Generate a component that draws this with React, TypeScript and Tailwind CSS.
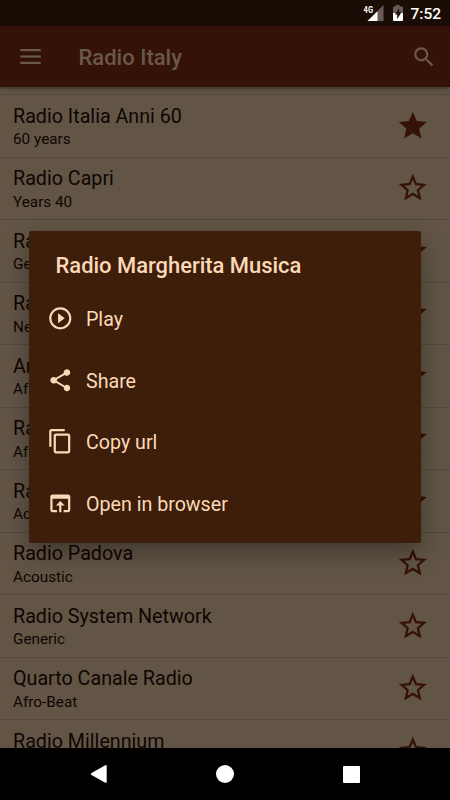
import { clsx } from 'clsx';

interface Station {
  name: string;
  genre: string;
  favorite?: boolean;
}

const stations: Station[] = [
  { name: 'Radio Italia Anni 60', genre: '60 years', favorite: true },
  { name: 'Radio Capri', genre: 'Years 40' },
  { name: 'Radio', genre: 'Generic' },
  { name: 'Radio', genre: 'News' },
  { name: 'Arena', genre: 'Afro-Beat' },
  { name: 'Radio', genre: 'Afro-Beat' },
  { name: 'Radio', genre: 'Acoustic' },
  { name: 'Radio Padova', genre: 'Acoustic' },
  { name: 'Radio System Network', genre: 'Generic' },
  { name: 'Quarto Canale Radio', genre: 'Afro-Beat' },
  { name: 'Radio Millennium', genre: '' },
];

const STAR =
  'M12 17.27L18.18 21l-1.64-7.03L22 9.24l-7.19-.61L12 2 9.19 8.63 2 9.24l5.46 4.73L5.82 21z';
const STAR_BORDER =
  'M22 9.24l-7.19-.62L12 2 9.19 8.63 2 9.24l5.46 4.73L5.82 21 12 17.27 18.18 21l-1.63-7.03L22 9.24zM12 15.4l-3.76 2.27 1-4.28-3.32-2.88 4.38-.38L12 6.1l1.71 4.04 4.38.38-3.32 2.88 1 4.28L12 15.4z';

const actions = [
  {
    label: 'Play',
    path: 'M10 16.5l6-4.5-6-4.5v9zM12 2C6.48 2 2 6.48 2 12s4.48 10 10 10 10-4.48 10-10S17.52 2 12 2zm0 18c-4.41 0-8-3.59-8-8s3.59-8 8-8 8 3.59 8 8-3.59 8-8 8z',
  },
  {
    label: 'Share',
    path: 'M18 16.08c-.76 0-1.44.3-1.96.77L8.91 12.7c.05-.23.09-.46.09-.7s-.04-.47-.09-.7l7.05-4.11c.54.5 1.25.81 2.04.81 1.66 0 3-1.34 3-3s-1.34-3-3-3-3 1.34-3 3c0 .24.04.47.09.7L8.04 9.81C7.5 9.31 6.79 9 6 9c-1.66 0-3 1.34-3 3s1.34 3 3 3c.79 0 1.5-.31 2.04-.81l7.12 4.16c-.05.21-.08.43-.08.65 0 1.61 1.31 2.92 2.92 2.92s2.92-1.31 2.92-2.92-1.31-2.92-2.92-2.92z',
  },
  {
    label: 'Copy url',
    path: 'M16 1H4c-1.1 0-2 .9-2 2v14h2V3h12V1zm3 4H8c-1.1 0-2 .9-2 2v14c0 1.1.9 2 2 2h11c1.1 0 2-.9 2-2V7c0-1.1-.9-2-2-2zm0 16H8V7h11v14z',
  },
  {
    label: 'Open in browser',
    path: 'M19 4H5c-1.11 0-2 .9-2 2v12c0 1.1.89 2 2 2h4v-2H5V8h14v10h-4v2h4c1.1 0 2-.9 2-2V6c0-1.1-.89-2-2-2zm-7 6l-4 4h3v6h2v-6h3l-4-4z',
  },
];

function Icon({ path, className }: { path: string; className?: string }) {
  return (
    <svg viewBox="0 0 24 24" fill="currentColor" className={clsx('shrink-0', className)}>
      <path d={path} />
    </svg>
  );
}

function StatusBar() {
  return (
    <div className="flex h-[26px] shrink-0 items-center justify-end bg-[#190d05] pr-[9px] text-white">
      <svg width="21" height="18" viewBox="0 0 21 18" className="mt-px mr-[8px]">
        <path d="M20.5 0v16H4.5z" fill="#685b55" />
        <path d="M14.5 6.3V16H4.5z" fill="#fff" />
        <path d="M0 0h10.2v8.6H0z" fill="#190d05" />
        <text
          x="0.6"
          y="8"
          fill="#fff"
          fontFamily="Roboto"
          fontWeight="700"
          fontSize="9.8"
          textLength="9.4"
          lengthAdjust="spacingAndGlyphs"
        >
          4G
        </text>
      </svg>
      <svg width="12" height="18" viewBox="0 0 12 18" className="mr-[6px]">
        <path d="M3.5 1h4v1.6H10q1 0 1 1V10H1V3.6q0-1 1-1h1.5z" fill="#685b55" />
        <path d="M1 9h10v7q0 1-1 1H2q-1 0-1-1z" fill="#fff" />
        <path d="M7.2 4.2v4h2.2l-4.2 7v-4.7H2.8z" fill="#190d05" />
      </svg>
      <span className="pt-[3px] text-[15.5px] leading-none font-medium">7:52</span>
    </div>
  );
}

function Toolbar() {
  return (
    <div className="z-10 flex h-[61px] shrink-0 items-center bg-[#341207] pr-[13px] pl-5 text-[#6a5948] shadow-[0_2px_4px_rgba(0,0,0,0.35)]">
      <svg width="21" height="16" viewBox="0 0 21 16" fill="currentColor" className="mt-px">
        <rect x="0.3" y="0" width="20.5" height="2.2" />
        <rect x="0.3" y="6.4" width="20.5" height="2.2" />
        <rect x="0.3" y="12.8" width="20.5" height="2.2" />
      </svg>
      <h1 className="ml-[37.5px] flex-1 pt-[3px] text-[22px] leading-none font-medium">
        Radio Italy
      </h1>
      <Icon
        className="mt-px size-[26px]"
        path="M15.5 14h-.79l-.28-.27C15.41 12.59 16 11.11 16 9.5 16 5.91 13.09 3 9.5 3S3 5.91 3 9.5 5.91 16 9.5 16c1.61 0 3.09-.59 4.23-1.57l.27.28v.79l5 4.99L20.49 19l-4.99-5zm-6 0C7.01 14 5 11.99 5 9.5S7.01 5 9.5 5 14 7.01 14 9.5 11.99 14 9.5 14z"
      />
    </div>
  );
}

function StationRow({ station }: { station: Station }) {
  return (
    <div className="flex h-[62.5px] shrink-0 items-center border-t border-[#54493b] pr-5 pl-[13px]">
      <div className="h-[47px] flex-1 pt-[1.7px] text-[#0f0502]">
        <div className="text-[19.7px] leading-[25px]">{station.name}</div>
        <div className="-mt-[0.9px] text-[15.3px] leading-[22px]">{station.genre}</div>
      </div>
      <Icon
        className="size-[33.6px] text-[#361107]"
        path={station.favorite ? STAR : STAR_BORDER}
      />
    </div>
  );
}

function StationDialog() {
  return (
    <div className="absolute top-[231px] left-[29px] z-20 h-[312px] w-[392px] rounded-xs bg-[#3d1e0b] text-[#fcd9b6] shadow-[0_10px_26px_rgba(0,0,0,0.35)]">
      <h2 className="pt-[22.4px] pl-[26.5px] text-[21.95px] leading-[26px] font-medium">
        Radio Margherita Musica
      </h2>
      <div className="mt-[8.6px]">
        {actions.map((a) => (
          <div key={a.label} className="flex h-[61.5px] items-center pl-[17.5px]">
            <Icon path={a.path} className="size-[26.6px]" />
            <span className="ml-[12.9px] pt-[3px] text-[19.65px] leading-none">{a.label}</span>
          </div>
        ))}
      </div>
    </div>
  );
}

export default function App() {
  return (
    <div className="relative flex h-[800px] w-[450px] flex-col overflow-hidden bg-[#625546] font-[Roboto,sans-serif]">
      <StatusBar />
      <Toolbar />
      <div className="flex min-h-0 flex-1 flex-col overflow-hidden pt-[7px]">
        {stations.map((s, i) => (
          <StationRow key={i} station={s} />
        ))}
      </div>
      <div className="flex h-[52px] shrink-0 items-center justify-between bg-black px-[90px]">
        <svg width="17" height="18" viewBox="0 0 17 18" fill="#fff">
          <path d="M15.3.2Q16.7-.3 16.7 1v16q0 1.2-1.4.7L1.5 9.9q-1.2-.9 0-1.8z" />
        </svg>
        <div className="size-[18px] rounded-full bg-white" />
        <div className="size-[17px] rounded-[1px] bg-white" />
      </div>
      <StationDialog />
    </div>
  );
}
